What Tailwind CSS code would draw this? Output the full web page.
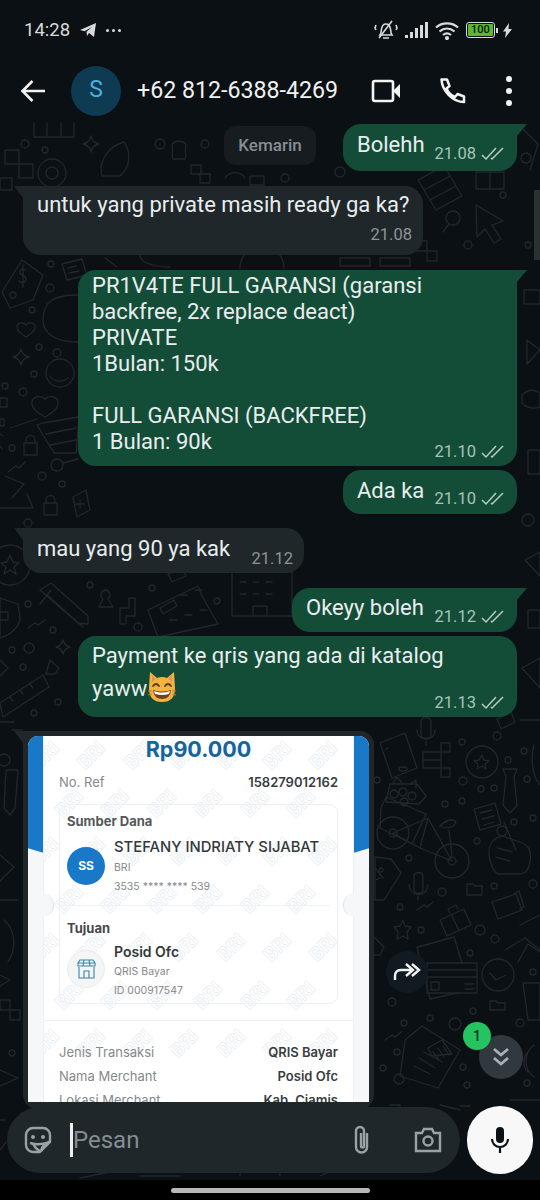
<!DOCTYPE html>
<html lang="en">

<head>
  <meta charset="UTF-8">
  <meta name="viewport" content="width=device-width, initial-scale=1.0">
  <title>WhatsApp</title>
  <script src="https://cdn.jsdelivr.net/npm/@tailwindcss/browser@4"></script>
</head>

<body class="bg-black">
  <div class="w-[540px] h-[1200px] flex flex-col overflow-hidden bg-[#0b1014] font-['Roboto',sans-serif] text-[#e9edef]">

    <!-- status bar -->
    <div class="h-[59px] flex items-center justify-between pl-[24px] pr-[28px] pt-[1px] text-[#d8dadb]">
      <div class="flex items-center">
        <span class="text-[18.500px] leading-none">14:28</span>
        <svg class="ml-[9px]" width="18" height="16" viewBox="0 0 18 16" fill="#d8dadb"><path d="M1 8 17 1 15 15 10 11 8 14 7.500 9.800 13 5 5.500 9.300Z"/></svg>
        <span class="ml-[9px] flex gap-[3px]">
          <i class="w-[3px] h-[3px] rounded-full bg-[#d8dadb]"></i><i class="w-[3px] h-[3px] rounded-full bg-[#d8dadb]"></i><i class="w-[3px] h-[3px] rounded-full bg-[#d8dadb]"></i>
        </span>
      </div>
      <div class="flex items-center">
        <svg width="24" height="20" viewBox="0 0 24 20" fill="none" stroke="#d8dadb" stroke-width="1.600"><path d="M6 15c1.500-2 1-4 1.500-6C8 6 10 4 12 4s4 2 4.500 5c.5 2 0 4 1.500 6Z"/><path d="M9 18h6M18 1 5 18M2 5l-1 3 1 2M22 5l1 3-1 2"/></svg>
        <svg class="ml-[7px]" width="24" height="16" viewBox="0 0 24 16" fill="#d8dadb"><rect x="0" y="13" width="3" height="3"/><rect x="5" y="10" width="3" height="6"/><rect x="10" y="6" width="3" height="10"/><rect x="15" y="3" width="3" height="13"/><rect x="20" y="0" width="3" height="16"/></svg>
        <svg class="ml-[6px]" width="24" height="19" viewBox="0 0 24 19" fill="none" stroke="#d8dadb" stroke-width="2.200"><path d="M1 6.500C7 1 17 1 23 6.500M4.500 10.500C9 6.500 15 6.500 19.500 10.500M8 14c2.500-2 5.500-2 8 0"/><circle cx="12" cy="17" r="1" fill="#d8dadb"/></svg>
        <div class="ml-[7px] w-[29px] h-[16px] rounded-[3px] border-[1.500px] border-[#d8dadb] p-[1px]">
          <div class="h-full rounded-[1px] bg-[#5cb82e] text-[11px] leading-[11px] text-center text-[#0b1014] font-medium">100</div>
        </div>
        <i class="w-[2px] h-[5px] bg-[#d8dadb] ml-[1px]"></i>
        <svg class="ml-[5px]" width="9" height="15" viewBox="0 0 9 15" fill="#d8dadb"><path d="M6 0 0 8.500h3L2 15 9 6H5.500Z"/></svg>
      </div>
    </div>

    <!-- toolbar -->
    <div class="h-[63px] flex items-center relative z-10 bg-[#0b1014]">
      <svg class="ml-[20px]" width="26" height="24" viewBox="0 0 26 24" fill="none" stroke="#f2f3f3" stroke-width="2.600"><path d="M25 12H3M12.500 2 2.500 12l10 10"/></svg>
      <div class="ml-[25px] w-[50px] h-[50px] rounded-full bg-[#0e3a52] flex items-center justify-center text-[#4fb0dc] text-[23px]">S</div>
      <div class="ml-[16px] text-[23.200px] leading-none text-[#f0f1f1]">+62 812-6388-4269</div>
      <svg class="ml-[33px]" width="30" height="26" viewBox="0 0 30 26" fill="none"><rect x="2" y="3" width="20" height="20" rx="2" stroke="#f2f3f3" stroke-width="2.600"/><path d="M22 13 29 6V20Z" fill="#f2f3f3"/></svg>
      <svg class="ml-[38px]" width="28" height="28" viewBox="0 0 28 28" fill="none" stroke="#f2f3f3" stroke-width="2.500"><path d="M2.500 2.500H8l2.500 6.500-3 2.500c1.500 3.500 5 7 8.500 8.500l2.500-3 6.500 2.500v5.500C14 25 3 14 2.500 2.500Z" stroke-linejoin="round"/></svg>
      <div class="ml-[39px] flex flex-col gap-[6px]">
        <i class="block w-[6px] h-[6px] rounded-full bg-[#f2f3f3]"></i><i class="block w-[6px] h-[6px] rounded-full bg-[#f2f3f3]"></i><i class="block w-[6px] h-[6px] rounded-full bg-[#f2f3f3]"></i>
      </div>
    </div>

    <!-- chat -->
    <main class="relative h-[1058px] overflow-hidden">
      <!-- wallpaper doodles -->
      <svg class="absolute inset-0" width="540" height="1058" viewBox="0 122 540 1058" fill="none" stroke="#21272b" stroke-width="1.300" stroke-linejoin="round" stroke-linecap="round">
        <!-- top left -->
        <path d="M34 123v14h40v-14M47 123v14M61 123v14M5 150h14v14h14v14H19v-14H5ZM0 178h12v12H0Z"/>
        <circle cx="52" cy="173" r="14"/><circle cx="52" cy="173" r="6"/>
        <path d="M91 136c1 5 3 7 8 8-5 1-7 3-8 8-1-5-3-7-8-8 5-1 7-3 8-8ZM102 176c-4-14 6-30 22-34 6 8 8 24-4 34Z"/>
        <path d="M172 145c2-5 12-5 14 0-2 4 1 8-1 14h-12c-2-6 1-10-1-14ZM191 165h10v9h9v9h-10v-9h-9Z"/>
        <circle cx="25" cy="144" r="4"/><circle cx="45" cy="150" r="3"/><circle cx="160" cy="144" r="5"/><circle cx="205" cy="144" r="4"/><circle cx="340" cy="172" r="5"/><circle cx="285" cy="178" r="4"/>
        <path d="M250 176h14v9h-14ZM225 178a12 12 0 0 1 20 0"/>
        <!-- top right -->
        <path d="M418 180l26-14 18 30-26 14ZM424 190l26-14M430 200l26-14M476 172h14v17h-14ZM490 172h14v17h-14ZM520 126l18 18-8 26"/>
        <path d="M476 205l27 16-11 4 9 14-7 4-9-14-8 8Z"/>
        <circle cx="453" cy="218" r="7"/><path d="M449 224l-6 8M407 231h10v10h-10ZM427 251h10v10h-10ZM417 241h10v10h-10Z"/>
        <circle cx="468" cy="245" r="4"/><circle cx="503" cy="195" r="3"/><circle cx="526" cy="158" r="5"/><circle cx="528" cy="245" r="3"/>
        <path d="M524 290h16v14h-16ZM527 340l13 10-13 14ZM522 395c6-6 12-6 18-2v14c-6 2-12 2-18-4ZM528 450h12v24h-12Z"/>
        <circle cx="528" cy="520" r="6"/><path d="M525 560l15-8v24ZM528 610h12v18h-12ZM522 668l18-10v30ZM520 720h20"/>
        <!-- left column -->
        <path d="M22 260l21 15-10 25-23 8-8-16ZM26 270c-3-2-7 0-6 3s6 2 6 6-5 4-7 2M23 265v22"/>
        <circle cx="13" cy="295" r="3"/><circle cx="51" cy="264" r="3"/><circle cx="50" cy="288" r="4"/><circle cx="32" cy="310" r="3"/><circle cx="39" cy="347" r="3"/><circle cx="57" cy="353" r="4"/><circle cx="34" cy="374" r="3"/><circle cx="5" cy="386" r="3"/><circle cx="23" cy="392" r="4"/><circle cx="12" cy="448" r="3"/><circle cx="42" cy="476" r="4"/><circle cx="62" cy="484" r="3"/><circle cx="28" cy="523" r="4"/>
        <path d="M62 264l20-5 5 16-20 5ZM68 268l8-2M69 273l10-2"/>
        <path d="M43 320c0-18 10-25 35-25M43 320c0 12 10 22 35 22"/>
        <path d="M26 337c-4-3-10-6-9-11 1-4 7-4 9-1 2-3 8-3 9 1 1 5-5 8-9 11ZM21 349c1 5 3 7 8 8-5 1-7 3-8 8-1-5-3-7-8-8 5-1 7-3 8-8Z"/>
        <circle cx="60" cy="373" r="14"/><path d="M50 376c4 6 12 7 18 2"/>
        <path d="M45 417c-6-4-14-8-13-15 1-6 9-7 13-3 4-4 12-3 13 3 1 7-7 11-13 15ZM37 425l17 28h22l3-36-36 6ZM46 434l30-6M50 445l26-5M10 428l27-9"/>
        <circle cx="57" cy="465" r="6"/><path d="M63 463l15-4"/>
        <path d="M24 443h13v12H24ZM26 443v-3a4 4 0 0 1 9 0v3M44 503h13v12H44ZM46 503v-3a4 4 0 0 1 9 0v3M8 472l8-6 3 2 6-6M5 476l19 8-12 14M0 508l33 0-6-14"/>
        <path d="M73 497l13-7 4 20-13 7ZM80 500v8M76 504h8"/>
        <path d="M0 398h7v9H0ZM0 419h4v7H0ZM0 434l3 2M0 446l2 3"/>
        <!-- lower left -->
        <circle cx="10" cy="565" r="20"/><path d="M10 555l3 7 6 1-5 4 2 7-6-4-6 4 2-7-5-4 6-1Z"/>
        <path d="M40 590l11-7 37 33 0 8-10-1ZM47 595l36 32M40 604l11-14"/>
        <path d="M105 590a5 5 0 0 1 3 9l5 8h-14l4-8a5 5 0 0 1 2-9ZM120 608h9v-10h6v18h-9v8h-6Z"/>
        <path d="M148 610l50-24 4 10 16 28-60 13ZM160 608l14-8 3 6-14 8ZM168 574l14-6 4 8-14 6ZM180 595h7M195 590h7M170 620h7M185 615h7M200 610h7"/>
        <path d="M232 572h60v44h-60ZM240 582h6M253 582h6M266 582h6M240 594h6M253 594h6M266 594h6M253 616v-10h14v10"/>
        <path d="M0 598l18 6 2 14c0 8-8 16-20 20ZM0 612h8v8H0Z"/>
        <path d="M28 628l7-5 3 2 7-5"/>
        <circle cx="28" cy="604" r="3"/><circle cx="53" cy="630" r="3"/><circle cx="12" cy="650" r="3"/><circle cx="29" cy="648" r="5"/><circle cx="23" cy="667" r="3"/><circle cx="58" cy="702" r="3"/><circle cx="34" cy="713" r="3"/><circle cx="152" cy="588" r="3"/><circle cx="217" cy="601" r="3"/><circle cx="138" cy="627" r="4"/><circle cx="90" cy="585" r="3"/>
        <path d="M63 640c1 4 3 6 7 7-4 1-6 3-7 7-1-4-3-6-7-7 4-1 6-3 7-7ZM50 660l9 8-4 6h-9ZM0 703l43-28 6 12-46 30ZM10 697l3 4M20 690l3 4M30 684l3 4"/>
        <path d="M0 660l8 8-8 8M0 722h14M12 730h10"/>
        <!-- left of receipt -->
        <circle cx="4" cy="760" r="6"/><path d="M6 770h12l-3 38-5 7-6-7ZM0 855l14 12-14 14M0 900h18M4 920c10 8 14 26 4 42M0 975l10 5-10 6M0 1000h10v10h10v10H10v-10H0ZM12 1050a3 3 0 1 0 .1 0M0 1070l18 8-18 8"/>
        <!-- right of receipt -->
        <path d="M380 743l25-10 12 35-25 10ZM386 749l2-1"/><ellipse cx="403" cy="769" rx="4" ry="2"/>
        <path d="M421 722c0-6 10-6 10 0v12c0 6-10 6-10 0ZM417 730c0 12 18 12 18 0M426 741v4"/>
        <path d="M441 743h9v9h-9ZM423 752h18v8h-18ZM423 760h18v8h-18ZM441 768h9v9h-9Z"/>
        <circle cx="482" cy="762" r="16"/><path d="M482 755l2 5 5 1-4 3 1 5-4-3-5 3 1-5-4-3 5-1Z"/>
        <path d="M503 769h14l-3 8 3 28-7 8-7-8 3-28ZM497 719l14-7 4 10-14 7Z"/>
        <path d="M474 809l21-6 6 21-21 6ZM480 813l12-3M482 819l12-3M484 825l10-3"/>
        <circle cx="393" cy="833" r="16"/><circle cx="393" cy="833" r="4"/><circle cx="452" cy="861" r="17"/><circle cx="452" cy="861" r="4"/>
        <path d="M393 833l35-15 24 43M428 818l-8 30-27-15M420 848l32 13M452 855l-3-25M440 826c6-6 12-8 16-4-2 6-10 7-16 4Z"/>
        <path d="M381 808l5-11 40 17-14 30-32-16ZM386 802l4-18 27 0 9 12-7 8ZM394 790a4 4 0 1 0 .1 0M403 788a4 4 0 1 0 .1 0M412 792a4 4 0 1 0 .1 0M404 798a4 4 0 1 0 .1 0M393 783l4-6 5 6M410 784l6-4 0 8"/>
        <path d="M490 860c-4-16 4-22 12-24l18 6c8 3 12 8 10 20-2 9-4 12-12 12h-20c-4-2-6-6-8-14ZM498 848l14 4M496 857l14 4M504 822l12 28"/>
        <circle cx="502" cy="831" r="5"/>
        <path d="M375 857l16 2 10 14-17 27h-9ZM375 868l8 10M381 868a2 2 0 1 0 .1 0M376 880l4-2"/>
        <path d="M414 877c0-6 9-6 9 0v12c0 6-9 6-9 0ZM409 885c1 12 18 13 19 0M418 896v4"/>
        <path d="M467 884h6l2 2h7v9h-15ZM492 902l24-8 6 16-24 9ZM514 894l5-3 5 16-4 2"/>
        <path d="M417 910l7-5 3 2 6-5M440 920l24-11 7 16-24 11ZM452 916l7 15M450 913l-2-4 8-4 2 4"/>
        <path d="M403 920l2 6 6 1-4 5 1 7-5-3-6 3 1-7-4-5 6-1Z"/>
        <path d="M372 935l12 12-4 8h-8ZM418 947l36-10 8 26M417 947l13 52 27-6"/>
        <path d="M427 963h50v30h-50ZM427 970h50M427 977h50M431 982h8v8h-8ZM465 984h9M465 989h9"/>
        <circle cx="498" cy="975" r="16"/><path d="M490 973l6 7 10-5"/>
        <path d="M490 1001h6l2 2h7v7h-15ZM518 962l10-18 12 8M523 983h17v37h-12Z"/>
        <path d="M385 1040l7-5 3 2 6-5M405 1040l17-14 38 24-22 38-38-12ZM424 1052l18 10M419 1058l16 10M414 1066l16 8M428 1048l14-8 10 14-20 2ZM433 1052l6 8M438 1048l6 9M443 1046l6 9"/>
        <circle cx="470" cy="953" r="3"/><circle cx="392" cy="1002" r="4"/><circle cx="473" cy="1011" r="3"/><circle cx="430" cy="1018" r="3"/><circle cx="404" cy="1023" r="3"/><circle cx="455" cy="1024" r="6"/><circle cx="520" cy="1023" r="4"/><circle cx="533" cy="972" r="3"/><circle cx="397" cy="1052" r="3"/><circle cx="383" cy="1068" r="3"/><circle cx="463" cy="1067" r="3"/><circle cx="399" cy="1079" r="5"/><circle cx="467" cy="1085" r="3"/><circle cx="527" cy="1083" r="3"/>
        <circle cx="463" cy="781" r="4"/><circle cx="481" cy="789" r="3"/><circle cx="494" cy="788" r="3"/><circle cx="462" cy="801" r="3"/><circle cx="445" cy="804" r="3"/><circle cx="514" cy="822" r="3"/><circle cx="533" cy="818" r="3"/><circle cx="477" cy="841" r="3"/><circle cx="409" cy="858" r="3"/><circle cx="442" cy="892" r="4"/><circle cx="494" cy="886" r="3"/><circle cx="533" cy="884" r="4"/><circle cx="400" cy="907" r="3"/><circle cx="421" cy="930" r="3"/><circle cx="480" cy="930" r="5"/><circle cx="495" cy="939" r="4"/><circle cx="462" cy="742" r="3"/><circle cx="497" cy="736" r="4"/><circle cx="508" cy="760" r="3"/><circle cx="524" cy="751" r="3"/><circle cx="527" cy="779" r="3"/><circle cx="377" cy="780" r="3"/>
        <path d="M534 745c-3 10-3 30 6 40M520 925l20-10M505 950l20-12 15 12M534 1045a20 20 0 0 0 0 32M528 1052a14 14 0 0 0 0 20"/>
        <!-- around the composer -->
        <path d="M390 1105h10v5M510 1100h30M440 1105l20 5M100 1106h40M470 1106h-10M0 1150l6-8M0 1120h6M140 1176h40M240 1176a20 20 0 0 1 40 0M320 1176l10-4M80 1178l30-6"/>
        <!-- strip under incoming bubble -->
        <path d="M140 255c0 6 10 12 30 12M240 268a22 22 0 0 1 44 0M340 258h30v8h-30ZM380 258h30v8h-30ZM105 258l12 9"/>
      </svg>

      <!-- scrollbar -->
      <div class="absolute right-0 top-[68px] w-[6px] h-[70px] bg-[#2b3033]"></div>

      <div class="relative flex flex-col pt-[2px]">
        <!-- outgoing -->
        <div class="relative self-end mr-[23px] w-[174px] h-[47px] rounded-[18px] rounded-tr-none bg-[#134d37] pl-[14px] pr-[12px] flex justify-between">
          <span class="text-[22px] leading-none mt-[10px]">Bolehh</span>
          <span class="mt-[21px] flex items-center h-[18px] text-[16.500px] text-[#a7c5b7]">21.08<svg class="ml-[5px]" width="24" height="14" viewBox="0 0 24 14" fill="none" stroke="#b4cdc1" stroke-width="1.500"><path d="M1 8l4 4L15 1M10 11l1 1L22 1"/></svg></span>
          <svg class="absolute top-0 left-full" width="10" height="12" viewBox="0 0 10 12" fill="#134d37"><path d="M0 0H10L0 12Z"/></svg>
        </div>

        <!-- incoming -->
        <div class="relative self-start ml-[23px] mt-[15px] w-[400px] h-[69px] rounded-[18px] rounded-tl-none bg-[#1f272a] pl-[14px] pr-[11px]">
          <div class="text-[22px] leading-none mt-[8px] whitespace-nowrap">untuk yang private masih ready ga ka?</div>
          <div class="text-right text-[16.500px] leading-none text-[#8b9598] mt-[11px]">21.08</div>
          <svg class="absolute top-0 right-full" width="9" height="12" viewBox="0 0 9 12" fill="#1f272a"><path d="M9 0H0L9 12Z"/></svg>
        </div>

        <!-- outgoing multi line -->
        <div class="relative self-end mr-[23px] mt-[15px] w-[439px] h-[196px] rounded-[18px] rounded-tr-none bg-[#134d37] pl-[14px] pr-[14px]">
          <div class="text-[22px] leading-[26px] pt-[3px]">PR1V4TE FULL GARANSI (garansi<br>backfree, 2x replace deact)<br>PRIVATE<br>1Bulan: 150k<br><br>FULL GARANSI (BACKFREE)<br>1 Bulan: 90k</div>
          <span class="absolute right-[12px] bottom-[5px] flex items-center h-[18px] text-[16.500px] text-[#a7c5b7]">21.10<svg class="ml-[5px]" width="24" height="14" viewBox="0 0 24 14" fill="none" stroke="#b4cdc1" stroke-width="1.500"><path d="M1 8l4 4L15 1M10 11l1 1L22 1"/></svg></span>
          <svg class="absolute top-0 left-full" width="10" height="12" viewBox="0 0 10 12" fill="#134d37"><path d="M0 0H10L0 12Z"/></svg>
        </div>

        <div class="self-end mr-[23px] mt-[4px] w-[174px] h-[44px] rounded-[18px] bg-[#134d37] pl-[14px] pr-[12px] flex justify-between">
          <span class="text-[22px] leading-none mt-[10px]">Ada ka</span>
          <span class="mt-[20px] flex items-center h-[18px] text-[16.500px] text-[#a7c5b7]">21.10<svg class="ml-[5px]" width="24" height="14" viewBox="0 0 24 14" fill="none" stroke="#b4cdc1" stroke-width="1.500"><path d="M1 8l4 4L15 1M10 11l1 1L22 1"/></svg></span>
        </div>

        <div class="relative self-start ml-[23px] mt-[14px] w-[281px] h-[45px] rounded-[18px] rounded-tl-none bg-[#1f272a] pl-[14px] pr-[11px] flex justify-between">
          <span class="text-[22px] leading-none mt-[10px]">mau yang 90 ya kak</span>
          <span class="mt-[23px] text-[16.500px] leading-none text-[#8b9598]">21.12</span>
          <svg class="absolute top-0 right-full" width="9" height="12" viewBox="0 0 9 12" fill="#1f272a"><path d="M9 0H0L9 12Z"/></svg>
        </div>

        <div class="relative self-end mr-[23px] mt-[15px] w-[225px] h-[44px] rounded-[18px] rounded-tr-none bg-[#134d37] pl-[14px] pr-[12px] flex justify-between">
          <span class="text-[22px] leading-none mt-[9px]">Okeyy boleh</span>
          <span class="mt-[20px] flex items-center h-[18px] text-[16.500px] text-[#a7c5b7]">21.12<svg class="ml-[5px]" width="24" height="14" viewBox="0 0 24 14" fill="none" stroke="#b4cdc1" stroke-width="1.500"><path d="M1 8l4 4L15 1M10 11l1 1L22 1"/></svg></span>
          <svg class="absolute top-0 left-full" width="10" height="12" viewBox="0 0 10 12" fill="#134d37"><path d="M0 0H10L0 12Z"/></svg>
        </div>

        <div class="relative self-end mr-[23px] mt-[4px] w-[439px] h-[81px] rounded-[18px] bg-[#134d37] px-[14px]">
          <div class="text-[22px] leading-[30px] pt-[5px]">Payment ke qris yang ada di katalog<br>yaww<svg class="inline-block align-[-7px]" width="30" height="32" viewBox="0 0 30 32"><path d="M3 1 10 7Q15 5 20 7L27 1 28 17Q28 31 15 31 2 31 2 17Z" fill="#f3b33e"/><path d="M5 4 9 8 5 11ZM25 4 21 8 25 11Z" fill="#e58f6a"/><path d="M6 15q3-4 6 0M18 15q3-4 6 0" fill="none" stroke="#5b3a1a" stroke-width="1.800" stroke-linecap="round"/><path d="M6 19Q15 22 24 19 23 28 15 28 7 28 6 19Z" fill="#7a3b1d"/><path d="M7 20Q15 23 23 20L22 23Q15 25 8 23Z" fill="#fff"/><path d="M1 20h4M1 24l4-1M25 20h4M25 23l4 1" stroke="#c9812c"/></svg></div>
          <span class="absolute right-[12px] bottom-[5px] flex items-center h-[18px] text-[16.500px] text-[#a7c5b7]">21.13<svg class="ml-[5px]" width="24" height="14" viewBox="0 0 24 14" fill="none" stroke="#b4cdc1" stroke-width="1.500"><path d="M1 8l4 4L15 1M10 11l1 1L22 1"/></svg></span>
        </div>

        <!-- image message -->
        <div class="relative self-start ml-[23px] mt-[14px] w-[351px] h-[378px] rounded-[14px] rounded-tl-none bg-[#1f272a] pl-[5px] pt-[5px]">
          <div class="relative w-[341px] h-[366px] rounded-t-[10px] overflow-hidden bg-[#f5f7f8] font-['Inter',sans-serif]">
            <!-- blue side strips -->
            <div class="absolute left-0 top-0 w-[16px] h-[117px] bg-[#1a78c9] [clip-path:polygon(0_0,100%_0,100%_100%,0_96%)]"></div>
            <div class="absolute right-0 top-0 w-[16px] h-[117px] bg-[#1a78c9] [clip-path:polygon(0_0,100%_0,100%_96%,0_100%)]"></div>

            <div class="relative mx-[15px] h-full overflow-hidden bg-white border-x border-[#eef1f3]">
              <!-- BRI watermark, sits under the receipt text -->
              <div aria-hidden="true" class="absolute inset-0 flex flex-col gap-[29px] pt-[10px] text-[19px] font-bold leading-none text-transparent [-webkit-text-stroke:0.6px_#e3eaf0] pointer-events-none">
                <div class="flex gap-[16px] -ml-[14px]"><span class="-rotate-45">BRI</span><span class="-rotate-45">BRI</span><span class="-rotate-45">BRI</span><span class="-rotate-45">BRI</span><span class="-rotate-45">BRI</span><span class="-rotate-45">BRI</span><span class="-rotate-45">BRI</span></div>
                <div class="flex gap-[16px] ml-[10px]"><span class="-rotate-45">BRI</span><span class="-rotate-45">BRI</span><span class="-rotate-45">BRI</span><span class="-rotate-45">BRI</span><span class="-rotate-45">BRI</span><span class="-rotate-45">BRI</span></div>
                <div class="flex gap-[16px] -ml-[14px]"><span class="-rotate-45">BRI</span><span class="-rotate-45">BRI</span><span class="-rotate-45">BRI</span><span class="-rotate-45">BRI</span><span class="-rotate-45">BRI</span><span class="-rotate-45">BRI</span><span class="-rotate-45">BRI</span></div>
                <div class="flex gap-[16px] ml-[10px]"><span class="-rotate-45">BRI</span><span class="-rotate-45">BRI</span><span class="-rotate-45">BRI</span><span class="-rotate-45">BRI</span><span class="-rotate-45">BRI</span><span class="-rotate-45">BRI</span></div>
                <div class="flex gap-[16px] -ml-[14px]"><span class="-rotate-45">BRI</span><span class="-rotate-45">BRI</span><span class="-rotate-45">BRI</span><span class="-rotate-45">BRI</span><span class="-rotate-45">BRI</span><span class="-rotate-45">BRI</span><span class="-rotate-45">BRI</span></div>
                <div class="flex gap-[16px] ml-[10px]"><span class="-rotate-45">BRI</span><span class="-rotate-45">BRI</span><span class="-rotate-45">BRI</span><span class="-rotate-45">BRI</span><span class="-rotate-45">BRI</span><span class="-rotate-45">BRI</span></div>
                <div class="flex gap-[16px] -ml-[14px]"><span class="-rotate-45">BRI</span><span class="-rotate-45">BRI</span><span class="-rotate-45">BRI</span><span class="-rotate-45">BRI</span><span class="-rotate-45">BRI</span><span class="-rotate-45">BRI</span><span class="-rotate-45">BRI</span></div>
              </div>

              <div class="relative h-full">
                <div class="text-center text-[21.500px] leading-none font-bold text-[#13649f] pt-[3px]">Rp90.000</div>
                <div class="flex justify-between px-[15px] mt-[15px] text-[13px] leading-none">
                  <span class="text-[#85898c]">No. Ref</span><span class="font-semibold text-[#3a3d40]">158279012162</span>
                </div>
                <div class="mx-[15px] mt-[15px] h-[200px] rounded-[9px] border border-[#eef1f3] px-[7px] pt-[10px]">
                  <div class="text-[13px] leading-none font-bold text-[#55585b]">Sumber Dana</div>
                  <div class="flex mt-[9px]">
                    <div class="mt-[10px] w-[38px] h-[38px] rounded-full bg-[#1a78c9] flex items-center justify-center text-white text-[12px] font-bold">SS</div>
                    <div class="ml-[9px]">
                      <div class="text-[14.800px] leading-none mt-[3px] font-medium text-[#35383a]">STEFANY INDRIATY SIJABAT</div>
                      <div class="text-[10.500px] leading-none text-[#85898c] mt-[9px]">BRI</div>
                      <div class="text-[10.500px] leading-none text-[#85898c] mt-[8px]">3535 **** **** 539</div>
                    </div>
                  </div>
                  <div class="h-px bg-[#eef1f3] mt-[13px] mb-[16px]"></div>
                  <div class="text-[13px] leading-none font-bold text-[#45484b]">Tujuan</div>
                  <div class="flex mt-[10px]">
                    <div class="mt-[5px] w-[38px] h-[38px] rounded-full bg-[#f4f6f5] border border-[#e9ecec] flex items-center justify-center">
                      <svg width="19" height="20" viewBox="0 0 19 20" fill="none" stroke="#3a81a8" stroke-width="1.100"><path d="M2 8v11h15V8M1 7V4l2-3h13l2 3v3H1ZM1 4h17M7 1 6 7M12 1l1 6M7 19v-7h5v7"/></svg>
                    </div>
                    <div class="ml-[9px]">
                      <div class="text-[14px] leading-none font-semibold text-[#35383a]">Posid Ofc</div>
                      <div class="text-[10.500px] leading-none text-[#85898c] mt-[8px]">QRIS Bayar</div>
                      <div class="text-[10.500px] leading-none text-[#85898c] mt-[8px]">ID 000917547</div>
                    </div>
                  </div>
                </div>
                <div class="h-px bg-[#eef1f3] mt-[16px]"></div>
                <div class="px-[15px] mt-[25px] flex flex-col gap-[11px] text-[13px] leading-[13px]">
                  <div class="flex justify-between"><span class="text-[#85898c]">Jenis Transaksi</span><span class="font-semibold text-[#3a3d40]">QRIS Bayar</span></div>
                  <div class="flex justify-between"><span class="text-[#85898c]">Nama Merchant</span><span class="font-semibold text-[#3a3d40]">Posid Ofc</span></div>
                  <div class="flex justify-between"><span class="text-[#85898c]">Lokasi Merchant</span><span class="font-semibold text-[#3a3d40]">Kab. Ciamis</span></div>
                </div>
              </div>
            </div>

            <!-- side notches -->
            <div class="absolute left-[6px] top-[158px] w-[20px] h-[22px] rounded-full bg-[#f5f7f8] border-r border-[#dfe4e7]"></div>
            <div class="absolute right-[6px] top-[158px] w-[20px] h-[22px] rounded-full bg-[#f5f7f8] border-l border-[#dfe4e7]"></div>
          </div>
          <svg class="absolute top-0 right-full" width="9" height="12" viewBox="0 0 9 12" fill="#1f272a"><path d="M9 0H0L9 12Z"/></svg>
        </div>
      </div>

      <!-- date chip -->
      <div class="absolute left-[224px] top-[4px] w-[92px] h-[39px] rounded-[12px] bg-[#161c20] flex items-center justify-center text-[17px] font-medium text-[#868f93]">Kemarin</div>

      <!-- forward -->
      <div class="absolute left-[386px] top-[829px] w-[42px] h-[42px] rounded-full bg-[#111a20] flex items-center justify-center">
        <svg width="28" height="20" viewBox="0 0 28 20" fill="none" stroke="#f2f3f3" stroke-width="2.400"><path d="M2 18v-4c0-4 2-6 6-6h10M13 2l7 6-7 6M19 2l7 6-7 6"/></svg>
      </div>

      <!-- scroll down -->
      <div class="absolute left-[479px] top-[913px] w-[44px] h-[44px] rounded-full bg-[#32393e] flex items-center justify-center">
        <svg width="18" height="22" viewBox="0 0 18 22" fill="none" stroke="#a9b1b5" stroke-width="2.800"><path d="M2 3l7 6 7-6M2 12l7 6 7-6"/></svg>
      </div>
      <div class="absolute left-[463px] top-[900px] w-[28px] h-[28px] rounded-full bg-[#25c460] flex items-center justify-center text-[14px] font-medium text-[#10301f]">1</div>

      <!-- composer -->
      <div class="absolute left-[7px] bottom-[7px] w-[453px] h-[66px] rounded-[33px] bg-[#1f272a] flex items-center">
        <svg class="ml-[17px]" width="28" height="28" viewBox="0 0 28 28" fill="none" stroke="#9aa2a6" stroke-width="2.400" stroke-linejoin="round"><path d="M9 2h10a7 7 0 0 1 7 7v7L16 26H9a7 7 0 0 1-7-7V9a7 7 0 0 1 7-7Z"/><path d="M6 17c5 1.500 13 1.500 19-1-3 1-7 3-8 9"/><path d="M9 17c1 3 3 6 7 8" /><circle cx="9" cy="11" r="2" fill="#9aa2a6" stroke="none"/><circle cx="19" cy="11" r="2" fill="#9aa2a6" stroke="none"/></svg>
        <i class="block ml-[18px] w-[3px] h-[34px] bg-[#eef0f0]"></i>
        <span class="text-[24px] leading-none text-[#848d91]">Pesan</span>
        <svg class="ml-auto" width="20" height="30" viewBox="0 0 20 30" fill="none" stroke="#9aa2a6" stroke-width="2.400"><path d="M15 8v14a5.500 5.500 0 0 1-11 0V6a4 4 0 0 1 8 0v15a1.500 1.500 0 0 1-3 0V8"/></svg>
        <svg class="ml-[42px] mr-[18px]" width="28" height="26" viewBox="0 0 28 26" fill="none" stroke="#9aa2a6" stroke-width="2.400"><path d="M2 6h6l2-4h8l2 4h6v18H2Z"/><circle cx="14" cy="14" r="4.500"/></svg>
      </div>

      <!-- mic -->
      <div class="absolute left-[467px] bottom-[6px] w-[66px] h-[68px] rounded-full bg-[#f8f8f8] flex items-center justify-center">
        <svg width="20" height="28" viewBox="0 0 20 28" fill="none"><rect x="6" y="1" width="8" height="16" rx="4" fill="#0b1014"/><path d="M2 13a8 8 0 0 0 16 0M10 21v6" stroke="#0b1014" stroke-width="2.200"/></svg>
      </div>
    </main>

    <!-- nav bar -->
    <div class="h-[20px] bg-black flex justify-center pt-[8px]">
      <div class="w-[199px] h-[5px] rounded-full bg-[#b8b8b8]"></div>
    </div>
  </div>
</body>

</html>
